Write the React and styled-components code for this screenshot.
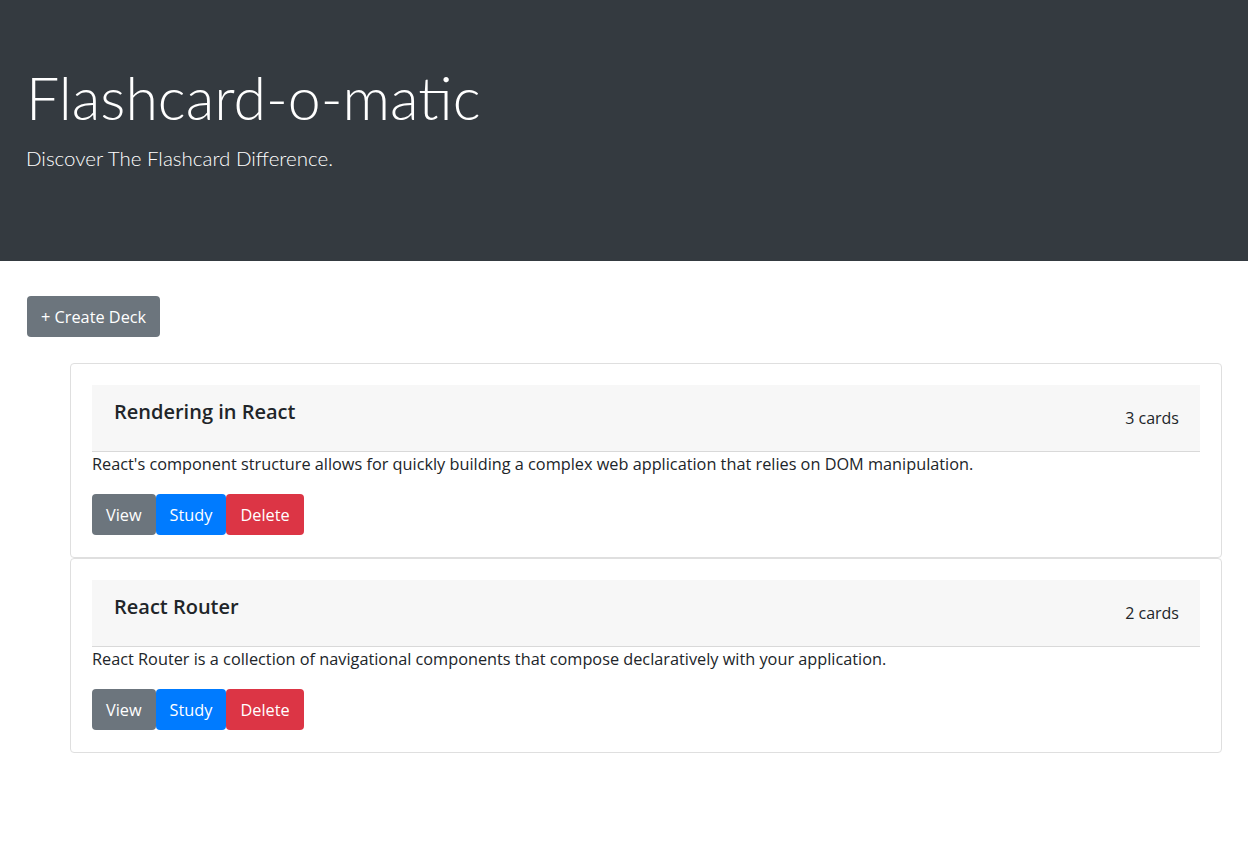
import React from 'react';
import styled, { createGlobalStyle } from 'styled-components';

const GlobalStyle = createGlobalStyle`
  html, body {
    margin: 0;
    padding: 0;
    background: #ffffff;
  }
  body {
    font-family: "Open Sans", "Noto Sans", "Liberation Sans", sans-serif;
    color: #212529;
    font-size: 16px;
    line-height: 1.5;
  }
  * {
    box-sizing: border-box;
  }
`;

const Jumbotron = styled.header`
  background-color: #343a40;
  color: #ffffff;
  height: 261px;
  padding: 63px 26px 0;
  font-family: "Lato", "Open Sans", sans-serif;
`;

const Title = styled.h1`
  font-size: 59px;
  font-weight: 300;
  line-height: 1.2;
  margin: 0 0 9px;
`;

const Lead = styled.p`
  font-size: 20.5px;
  font-weight: 300;
  margin: 0;
`;

const Main = styled.main`
  padding: 35px 26px 40px 27px;
`;

const Button = styled.button`
  font-family: inherit;
  font-size: 16.3px;
  line-height: 24px;
  height: 41px;
  padding: 0 14px;
  border: none;
  border-radius: 4px;
  color: #ffffff;
  background-color: ${(p) => p.$bg || '#6c757d'};
  cursor: pointer;
`;

const DeckList = styled.div`
  margin: 26px 0 0 43px;
  display: flex;
  flex-direction: column;
`;

const DeckCard = styled.section`
  border: 1px solid #dfdfdf;
  border-radius: 4px;
  padding: 21px 21px 22px;
`;

const DeckHeader = styled.div`
  display: flex;
  justify-content: space-between;
  align-items: center;
  height: 67px;
  padding: 0 21px 0 22px;
  background-color: #f7f7f7;
  border-bottom: 1px solid #d9d9d9;
`;

const DeckName = styled.h5`
  font-size: 20px;
  font-weight: 600;
  line-height: 24px;
  margin: 0 0 12px;
`;

const CardCount = styled.span`
  font-size: 16px;
  line-height: 24px;
`;

const Description = styled.p`
  margin: 0 0 18px;
  font-size: 16.3px;
  line-height: 24px;
`;

const ButtonRow = styled.div`
  display: flex;
`;

const decks = [
  {
    id: 1,
    name: 'Rendering in React',
    description:
      "React's component structure allows for quickly building a complex web application that relies on DOM manipulation.",
    cards: 3,
  },
  {
    id: 2,
    name: 'React Router',
    description:
      'React Router is a collection of navigational components that compose declaratively with your application.',
    cards: 2,
  },
];

const App = () => {
  return (
    <div>
      <GlobalStyle />
      <Jumbotron>
        <Title>Flashcard-o-matic</Title>
        <Lead>Discover The Flashcard Difference.</Lead>
      </Jumbotron>
      <Main>
        <Button>+ Create Deck</Button>
        <DeckList>
          {decks.map((deck) => (
            <DeckCard key={deck.id}>
              <DeckHeader>
                <DeckName>{deck.name}</DeckName>
                <CardCount>{deck.cards} cards</CardCount>
              </DeckHeader>
              <Description>{deck.description}</Description>
              <ButtonRow>
                <Button>View</Button>
                <Button $bg="#007bff">Study</Button>
                <Button $bg="#dc3545">Delete</Button>
              </ButtonRow>
            </DeckCard>
          ))}
        </DeckList>
      </Main>
    </div>
  );
};

export default App;
